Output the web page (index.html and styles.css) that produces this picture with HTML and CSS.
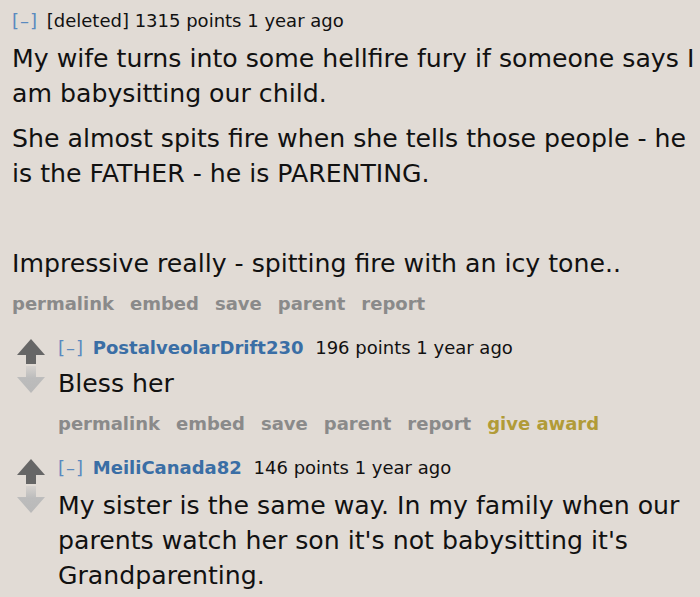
FILE: index.html
```html
<!DOCTYPE html>
<html>
<head>
<meta charset="utf-8">
<link rel="stylesheet" href="styles.css">
</head>
<body>
<div class="comment top">
  <div class="tagline"><span class="expand">[–]</span> [deleted] 1315 points 1 year ago</div>
  <div class="md">
    <p>My wife turns into some hellfire fury if someone says I am babysitting our child.</p>
    <p>She almost spits fire when she tells those people - he is the FATHER - he is PARENTING.</p>
    <p>&nbsp;</p>
    <p>Impressive really - spitting fire with an icy tone..</p>
  </div>
  <ul class="buttons">
    <li>permalink</li><li>embed</li><li>save</li><li>parent</li><li>report</li>
  </ul>
  <div class="child">
    <div class="comment reply">
      <div class="votes">
        <svg class="arrow" width="30" height="26" viewBox="0 0 30 26"><path class="up" d="M14 0 L28 16 L19 16 L19 25 L9 25 L9 16 L0 16 Z"/></svg>
        <svg class="arrow" width="30" height="28" viewBox="0 0 30 28"><defs><linearGradient id="g1" x1="0" y1="0" x2="0" y2="1"><stop offset="0" stop-color="#d6d2ce"/><stop offset="0.45" stop-color="#bcbcbc"/><stop offset="1" stop-color="#b9b9b9"/></linearGradient></defs><path fill="url(#g1)" d="M9 0 L19 0 L19 11 L28 11 L14 27 L0 11 L9 11 Z"/></svg>
      </div>
      <div class="entry">
        <div class="tagline"><span class="expand">[–]</span> <span class="author">PostalveolarDrift230</span> <span class="score">196 points 1 year ago</span></div>
        <div class="md"><p>Bless her</p></div>
        <ul class="buttons">
          <li>permalink</li><li>embed</li><li>save</li><li>parent</li><li>report</li><li class="award">give award</li>
        </ul>
      </div>
    </div>
    <div class="comment reply">
      <div class="votes">
        <svg class="arrow" width="30" height="26" viewBox="0 0 30 26"><path class="up" d="M14 0 L28 16 L19 16 L19 25 L9 25 L9 16 L0 16 Z"/></svg>
        <svg class="arrow" width="30" height="28" viewBox="0 0 30 28"><defs><linearGradient id="g2" x1="0" y1="0" x2="0" y2="1"><stop offset="0" stop-color="#d6d2ce"/><stop offset="0.45" stop-color="#bcbcbc"/><stop offset="1" stop-color="#b9b9b9"/></linearGradient></defs><path fill="url(#g2)" d="M9 0 L19 0 L19 11 L28 11 L14 27 L0 11 L9 11 Z"/></svg>
      </div>
      <div class="entry">
        <div class="tagline"><span class="expand">[–]</span> <span class="author">MeiliCanada82</span> <span class="score">146 points 1 year ago</span></div>
        <div class="md last"><p>My sister is the same way. In my family when our parents watch her son it's not babysitting it's Grandparenting.</p></div>
      </div>
    </div>
  </div>
</div>
</body>
</html>
```

FILE: styles.css
```css
html, body {
  margin: 0;
  padding: 0;
  background: #e1dbd5;
}
body {
  padding: 8px 4px 0 12px;
  font-family: "DejaVu Sans", Verdana, sans-serif;
  color: #111;
  overflow: hidden;
}
.tagline {
  font-size: 18px;
  line-height: 26px;
  color: #111;
  white-space: nowrap;
}
.expand {
  color: #5a8abf;
  margin-right: 3px;
  letter-spacing: 1px;
}
.author {
  color: #3a6ea5;
  font-weight: bold;
  margin-right: 6px;
}
.md {
  margin-top: 7px;
}
.md p {
  margin: 0 0 10px 0;
  font-family: "DejaVu Sans", Verdana, sans-serif;
  font-size: 25.2px;
  line-height: 35px;
  color: #111;
}
.buttons {
  list-style: none;
  margin: 0;
  padding: 0;
  display: flex;
  gap: 16px;
  font-size: 18px;
  font-weight: bold;
  color: #8a8a8a;
  line-height: 26px;
}
.buttons .award {
  color: #b19b38;
}
.child {
  margin-top: 18px;
}
.reply {
  display: flex;
  margin-left: 5px;
}
.votes {
  display: flex;
  flex-direction: column;
  flex: 0 0 41px;
  padding-top: 4px;
  gap: 1px;
}
.arrow .up { fill: #666; }
.entry .md {
  margin-top: 5px;
}
.entry .md.last {
  margin-top: 7px;
}
.entry .buttons {
  margin-top: 2px;
}
.reply + .reply {
  margin-top: 18px;
}
```
